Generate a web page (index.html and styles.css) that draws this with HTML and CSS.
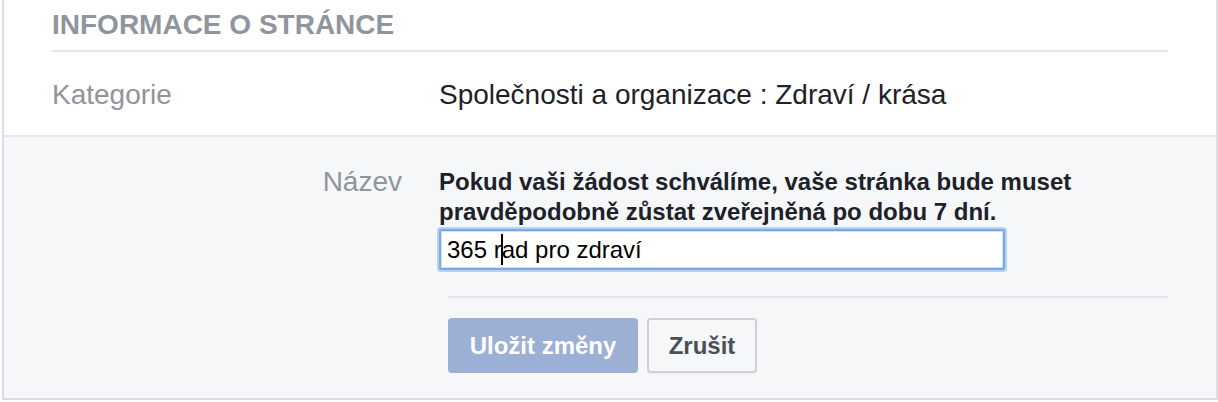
FILE: index.html
```html
<!DOCTYPE html>
<html lang="cs">
<head>
<meta charset="utf-8">
<title>Informace o stránce</title>
<link rel="stylesheet" href="styles.css">
</head>
<body>
<div class="card">
  <div class="card-head">INFORMACE O STRÁNCE</div>
  <div class="info-row">
    <div class="info-label">Kategorie</div>
    <div class="info-value">Společnosti a organizace : Zdraví / krása</div>
  </div>
  <div class="edit-row">
    <div class="edit-grid">
      <div class="edit-label">Název</div>
      <div class="edit-body">
        <div class="edit-note">Pokud vaši žádost schválíme, vaše stránka bude muset pravděpodobně zůstat zveřejněná po dobu 7 dní.</div>
        <div class="text-field"><span>365 r</span><span class="caret"></span><span>ad pro zdraví</span></div>
      </div>
    </div>
    <div class="edit-footer">
      <button class="btn btn-primary" type="button">Uložit změny</button>
      <button class="btn btn-default" type="button">Zrušit</button>
    </div>
  </div>
</div>
</body>
</html>
```

FILE: styles.css
```css
html, body {
  margin: 0;
  padding: 0;
  background: #ffffff;
}

body {
  font-family: "Liberation Sans", Arial, Helvetica, sans-serif;
  color: #1d2129;
}

.card {
  margin-left: 2px;
  width: 1212px;
  border: 2px solid #dadde1;
  border-top: none;
  background: #ffffff;
}

.card-head {
  margin: 0 48px;
  padding: 9px 0 9px;
  height: 32px;
  line-height: 32px;
  font-size: 28px;
  font-weight: bold;
  color: #90949c;
  border-bottom: 2px solid #e5e6e9;
}

.info-row {
  display: flex;
  align-items: center;
  box-sizing: border-box;
  height: 85px;
  padding: 2px 48px 0;
  border-bottom: 2px solid #e5e6e9;
  font-size: 28px;
  line-height: 32px;
}

.info-label {
  width: 387px;
  flex: none;
  color: #90949c;
}

.info-value {
  color: #1d2129;
}

.edit-row {
  background: #f6f7f9;
  padding: 0 48px;
}

.edit-grid {
  display: grid;
  grid-template-columns: 350px 1fr;
  column-gap: 37px;
  padding-top: 30px;
}

.edit-label {
  text-align: right;
  font-size: 28px;
  line-height: 30px;
  color: #90949c;
}

.edit-note {
  font-size: 24px;
  line-height: 30px;
  font-weight: bold;
  color: #1d2129;
}

.text-field {
  box-sizing: border-box;
  margin-top: 2px;
  width: 566px;
  height: 41px;
  padding: 0 6px;
  border: 2px solid #7ba9e3;
  border-radius: 2px;
  background: #ffffff;
  box-shadow: 0 0 0 2px #b8d1f1, inset 0 0 0 1px #cfe0f7;
  font-size: 24px;
  line-height: 37px;
  color: #000000;
  display: flex;
  align-items: center;
  white-space: pre;
}

.caret {
  display: inline-block;
  width: 2px;
  height: 31px;
  margin: 0 -1px 0 -1px;
  background: #000000;
}

.edit-footer {
  margin-left: 396px;
  margin-top: 26px;
  border-top: 2px solid #e5e6e9;
  padding: 20px 0 25px;
  display: flex;
  gap: 9px;
}

.btn {
  box-sizing: border-box;
  height: 55px;
  padding: 0 19px;
  border-radius: 4px;
  font-family: "Liberation Sans", Arial, Helvetica, sans-serif;
  font-size: 24px;
  font-weight: bold;
  line-height: 51px;
}

.btn-primary {
  width: 190px;
  border: 2px solid #9cb0d5;
  background: #9cb0d5;
  color: #ffffff;
}

.btn-default {
  width: 110px;
  border: 2px solid #ced0d4;
  background: #f6f7f9;
  color: #4b4f56;
  box-shadow: 0 1px 1px rgba(0, 0, 0, 0.05);
}
```
